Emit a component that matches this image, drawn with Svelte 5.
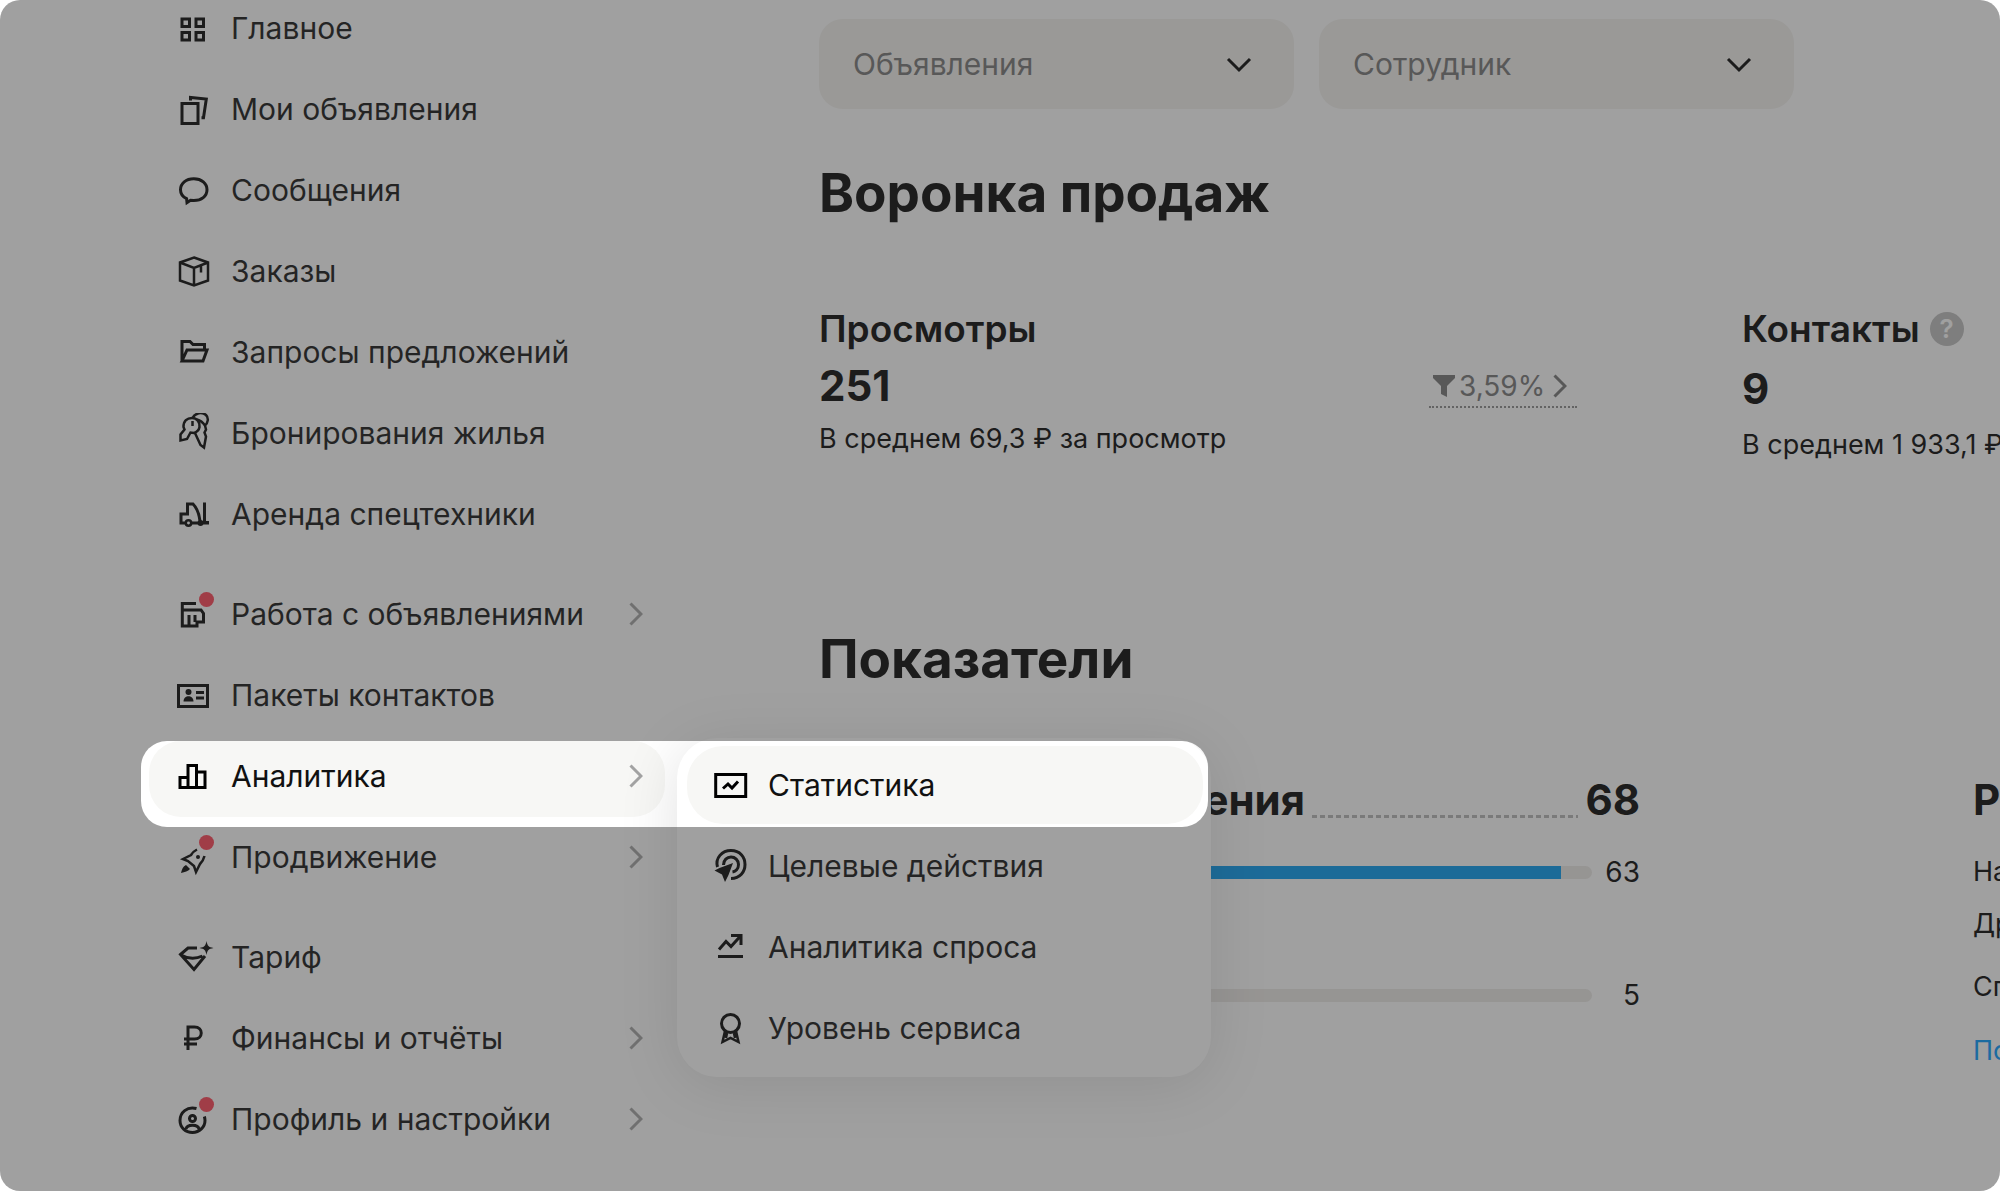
<script lang="ts">
  interface Item {
    icon: string;
    label: string;
    arrow?: boolean;
    dot?: boolean;
    active?: boolean;
  }

  const groups: Item[][] = [
    [
      { icon: "grid", label: "Главное" },
      { icon: "copy", label: "Мои объявления" },
      { icon: "chat", label: "Сообщения" },
      { icon: "box", label: "Заказы" },
      { icon: "folder", label: "Запросы предложений" },
      { icon: "keys", label: "Бронирования жилья" },
      { icon: "forklift", label: "Аренда спецтехники" },
    ],
    [
      { icon: "store", label: "Работа с объявлениями", arrow: true, dot: true },
      { icon: "card", label: "Пакеты контактов" },
      { icon: "bars", label: "Аналитика", arrow: true, active: true },
      { icon: "rocket", label: "Продвижение", arrow: true, dot: true },
    ],
    [
      { icon: "diamond", label: "Тариф" },
      { icon: "ruble", label: "Финансы и отчёты", arrow: true },
      { icon: "profile", label: "Профиль и настройки", arrow: true, dot: true },
    ],
  ];

  const submenu: Item[] = [
    { icon: "stats", label: "Статистика", active: true },
    { icon: "target", label: "Целевые действия" },
    { icon: "trend", label: "Аналитика спроса" },
    { icon: "award", label: "Уровень сервиса" },
  ];

  const filters = ["Объявления", "Сотрудник"];

  const bars = [
    { value: 63, percent: 96 },
    { value: 5, percent: 7 },
  ];

  const costs = ["На продвижение", "Другие расходы", "Списания"];
</script>

{#snippet icon(name: string)}
  <svg class="icon" viewBox="0 0 40 40" aria-hidden="true">
    {#if name === "grid"}
      <path d="M8 11h7.5v7.5H8zM22 11h7.5v7.5H22zM8 24.5h7.5V32H8zM22 24.5h7.5V32H22z" />
    {:else if name === "copy"}
      <path d="M8 14.5h16v20H8zM16.5 11.5V8.4L32.3 10l-2.8 18.7h-2" />
    {:else if name === "chat"}
      <path d="M12.6 28.7C8.6 26.8 6.5 23.7 6.5 19.8 6.5 13.3 12 8.8 19.8 8.8S33 13.3 33 19.800s-5.6 10.8-13.2 10.8l-3.3-.3-3.5 2.4z" />
    {:else if name === "box"}
      <path class="thin" d="M20 6.5l14 5v18L20 34.500 6 29.500v-18zM6 11.500l14 5.500 14-5.500M20 17v17M27 14.500v7" />
    {:else if name === "folder"}
      <path d="M8 29V9.500h8l3 3h11.500V18M8 29l5-11h20l-4 11z" />
    {:else if name === "keys"}
      <path class="thin" d="M18.500 5C21 0 28-1.500 32 2c3 3 2 8-1 10.500M23 6.500c4 1 6 3 8 6l1 4-1.500 3 1.500 4-2 11-3.500-2.500L21 20" />
      <path class="thin" d="M9.500 14c0-6 3.500-9 8.500-9s8 4 7.500 9c-.5 3-2.500 5-5.500 6l-3.500-.5L13 26l-6.500 1.500v-6l4-5zM18.500 8v5" />
    {:else if name === "forklift"}
      <path d="M11 29H7v-9h6.500V10H19c4 4 6 9 7 17M30.500 8.500v20H35M17 29h18" />
      <circle class="thin" cx="14.500" cy="29" r="2.700" /><circle class="fill" cx="26.500" cy="29" r="3" />
    {:else if name === "store"}
      <path d="M22 9.500H8.300V32H23v-4h6.500v-8.500L27 16H8.300M15 21v10M21 21v7" />
    {:else if name === "card"}
      <path d="M4.500 10.500h29v21h-29zM22 17.500h8M22 23h8" />
      <circle class="fill" cx="14.500" cy="17" r="3" /><path class="fill" d="M9.500 26.500c0-7 10-7 10 0z" />
    {:else if name === "bars"}
      <path d="M6 21.500h8v10H6zM14 9.500h8.500v22H14zM22.500 16H31v15.500h-8.500z" />
    {:else if name === "rocket"}
      <path class="thin" d="M23 12.500c-3 1.500-4.500 3-6 5.500l-8 4 5 2 6 5 2 6 4-8c3-3 4-6 4.500-8" />
      <circle class="fill" cx="24" cy="20" r="2" /><path class="fill" d="M12 28l4 4c-2 2.500-5 3-9 4 1-4 2-6.500 5-8z" />
    {:else if name === "diamond"}
      <path d="M23 11H14l-7.500 6.500L20 32.500 31 19M7 18c7 4 15 4 21.500 1" />
      <path class="fill" d="M32.500 4c1 5 2 6 7 7-5 1-6 2-7 7-1-5-2-6-7-7 5-1 6-2 7-7z" />
    {:else if name === "ruble"}
      <path d="M14 32V9h6.500c9 0 9 12 0 12H10M10 26h13" />
    {:else if name === "profile"}
      <path d="M22.500 9.500C13 7 6 13.500 6 21.500c0 7 5.500 12 12.500 12S31 28 31 21.500c0-1.500-.2-2.500-.6-4M12 30c1-5 12-5 13 0" />
      <circle cx="18.500" cy="19.500" r="3" />
    {:else if name === "stats"}
      <path d="M4.700 9.500h30v22h-30zM12 23.500l5-4.500 4 4 6-6.500" />
    {:else if name === "target"}
      <path d="M6.500 21C4 12 11 4.500 20 4.500S34 11 34 18.500s-5 14-14 14M12.500 19c0-5 3.500-8 7.500-8s7.500 3 7.500 7.500-3 7-6 7.500" />
      <path class="fill" d="M22 17l-4.500 12-3.500 7-3-7.500-7.500-4 5-2.500z" />
    {:else if name === "trend"}
      <path d="M8 22.500l7-8 5 5L29.500 9M20 8.500h10V18M7 29.500h25" />
    {:else if name === "award"}
      <circle cx="19.500" cy="15.500" r="9" /><path class="thin" d="M14 23l-2.500 11 8-4 8 4L25 23M16 25l-1 5M23 25l1 5" />
    {/if}
  </svg>
{/snippet}

{#snippet chevron()}
  <svg class="chevron" viewBox="0 0 14 24" aria-hidden="true"><path d="M1.5 1.5L12 12 1.5 22.5" /></svg>
{/snippet}

<div class="page">
  <nav class="sidebar">
    {#each groups as group}
      <ul class="group">
        {#each group as item}
          <li>
            <a class="row" class:row--active={item.active} href="#{item.icon}">
              <span class="icon-wrap">
                {@render icon(item.icon)}
                {#if item.dot}<span class="dot"></span>{/if}
              </span>
              <span class="label">{item.label}</span>
              {#if item.arrow}{@render chevron()}{/if}
            </a>
            {#if item.active}
              <ul class="submenu">
                {#each submenu as sub}
                  <li>
                    <a class="row row--sub" class:row--active={sub.active} href="#{sub.icon}">
                      {@render icon(sub.icon)}
                      <span class="label">{sub.label}</span>
                    </a>
                  </li>
                {/each}
              </ul>
              <div class="spotlight"></div>
            {/if}
          </li>
        {/each}
      </ul>
    {/each}
  </nav>

  <main class="main">
    <div class="filters">
      {#each filters as name}
        <div class="filter">
          <select aria-label={name}><option>{name}</option></select>
          <svg class="filter-arrow" viewBox="0 0 26 16" aria-hidden="true"><path d="M2 2l11 11L24 2" /></svg>
        </div>
      {/each}
    </div>

    <h2>Воронка продаж</h2>
    <section class="funnel">
      <div class="metric">
        <h3>Просмотры</h3>
        <strong>251</strong>
        <p>В среднем 69,3 ₽ за просмотр</p>
      </div>
      <a class="conversion" href="#conversion">
        <svg class="funnel-icon" viewBox="0 0 22 22" aria-hidden="true"><path d="M0 0h22v3l-8 8v11l-6-3v-8L0 3z" /></svg>
        3,59%
        {@render chevron()}
      </a>
      <div class="metric metric--help">
        <h3>Контакты <button class="help" aria-label="Подсказка">?</button></h3>
        <strong>9</strong>
        <p>В среднем 1 933,1 ₽</p>
      </div>
    </section>

    <h2>Показатели</h2>
    <section class="stats">
      <div class="stat">
        <div class="total">
          <h3>Все объявления</h3>
          <span class="leader"></span>
          <strong>68</strong>
        </div>
        {#each bars as bar}
          <div class="bar">
            <div class="track"><div class="fill-bar" style="width: {bar.percent}%"></div></div>
            <span>{bar.value}</span>
          </div>
        {/each}
      </div>
      <div class="costs">
        <h3>Расходы</h3>
        {#each costs as cost}
          <p>{cost}</p>
        {/each}
        <a href="#more">Подробнее</a>
      </div>
    </section>
  </main>
</div>

<style>
  :global(body) { margin: 0; background: #fff; }
  .page { position: relative; display: flex; height: 100vh; overflow: hidden; border-radius: 20px; background: #fff; color: #000; font-family: Inter, "Noto Sans", sans-serif; font-size: 30px; white-space: nowrap; }
  ul, h2, h3, p { margin: 0; padding: 0; list-style: none; }
  a { color: inherit; text-decoration: none; }

  .sidebar { display: flex; flex-direction: column; gap: 24px; flex: none; width: 516px; margin: -7px 154px 0 149px; }
  .group { display: flex; flex-direction: column; gap: 5px; }
  .group > li { position: relative; }
  .row { display: flex; align-items: center; gap: 17px; box-sizing: border-box; height: 76px; padding: 0 22px 6px 25px; border-radius: 32px; }
  .row--active { background: #f7f7f5; }
  .label { flex: 1; color: #111; }
  .icon-wrap { position: relative; display: flex; }
  .icon { flex: none; width: 40px; height: 40px; fill: none; stroke: #000; stroke-width: 3; }
  .icon .thin { stroke-width: 2.5; }
  .icon .fill { fill: #000; stroke: none; }
  .dot { position: absolute; top: -2px; right: 0; width: 15px; height: 15px; border-radius: 50%; background: #ff4053; }
  .chevron { flex: none; width: 14px; height: 24px; fill: none; stroke: #a3a3a3; stroke-width: 3; }

  .submenu { position: absolute; z-index: 1; top: -3px; left: 528px; display: flex; flex-direction: column; gap: 3px; box-sizing: border-box; width: 534px; padding: 8px 8px 10px 10px; border-radius: 40px; background: #fff; box-shadow: 0 8px 60px rgba(0, 0, 0, 0.12); }
  .row--sub { height: 78px; padding: 0 24px; border-radius: 36px; }
  .spotlight { position: absolute; z-index: 2; top: 0; left: -8px; width: 1067px; height: 86px; border-radius: 26px; box-shadow: 0 0 0 3000px rgba(58, 58, 58, 0.482); pointer-events: none; }

  .main { flex: 1; min-width: 0; padding-top: 19px; overflow: hidden; }
  .filters { display: flex; gap: 25px; }
  .filter { position: relative; flex: 0 1 475px; }
  .filter select { appearance: none; box-sizing: border-box; width: 100%; height: 90px; padding: 0 34px; border: 0; border-radius: 24px; background: #f3f1ee; color: #757575; font: inherit; }
  .filter-arrow { position: absolute; top: 38px; right: 42px; width: 26px; height: 16px; fill: none; stroke: #000; stroke-width: 3; pointer-events: none; }
  h2 { margin-top: 52px; font-size: 53px; line-height: 64px; font-weight: 700; }
  h3 { font-size: 37px; line-height: 48px; font-weight: 600; }
  strong { font-size: 42px; line-height: 56px; font-weight: 700; }
  p { font-size: 27px; line-height: 40px; }

  .funnel { display: grid; grid-template-columns: 610px 313px 1fr; margin-top: 80px; }
  .metric { display: flex; flex-direction: column; gap: 5px; height: 160px; }
  .metric--help { gap: 8px; }
  .metric--help h3 { display: flex; align-items: center; gap: 10px; }
  .help { width: 34px; height: 34px; padding: 0; border: 0; border-radius: 50%; background: #bdbdbd; color: #fff; font: 600 26px/34px Inter, sans-serif; }
  .conversion { display: flex; align-items: center; justify-self: start; gap: 4px; height: 40px; margin-top: 61px; padding: 0 10px 0 4px; border-bottom: 2px dotted #8a8a8a; align-self: start; color: #757575; font-size: 28px; }
  .conversion .chevron { margin-left: 4px; stroke: #757575; }
  .funnel-icon { width: 22px; height: 22px; fill: #757575; }

  .funnel + h2 { margin-top: 162px; }
  .stats { display: grid; grid-template-columns: 821px 1fr; column-gap: 333px; margin-top: 81px; }
  .stats h3 { font-size: 42px; line-height: 56px; font-weight: 700; }
  .total { display: flex; align-items: center; gap: 7px; margin-bottom: 24px; }
  .total h3 { width: 486px; text-align: right; }
  .leader { flex: 1; align-self: flex-end; height: 3px; margin-bottom: 10px; background: repeating-linear-gradient(90deg, #b5b5b5 0 5px, transparent 5px 8px); }
  .bar { display: flex; align-items: center; justify-content: space-between; height: 40px; margin-bottom: 83px; font-size: 28px; }
  .track { width: 773px; height: 13px; border-radius: 7px; overflow: hidden; background: #ece9e6; }
  .fill-bar { height: 100%; background: #0099f0; }
  .costs p { margin-top: 12px; }
  .costs h3 + p { margin-top: 24px; }
  .costs p:nth-of-type(3) { margin-top: 23px; }
  .costs a { display: block; margin-top: 24px; color: #09f; font-size: 27px; line-height: 40px; }
</style>
